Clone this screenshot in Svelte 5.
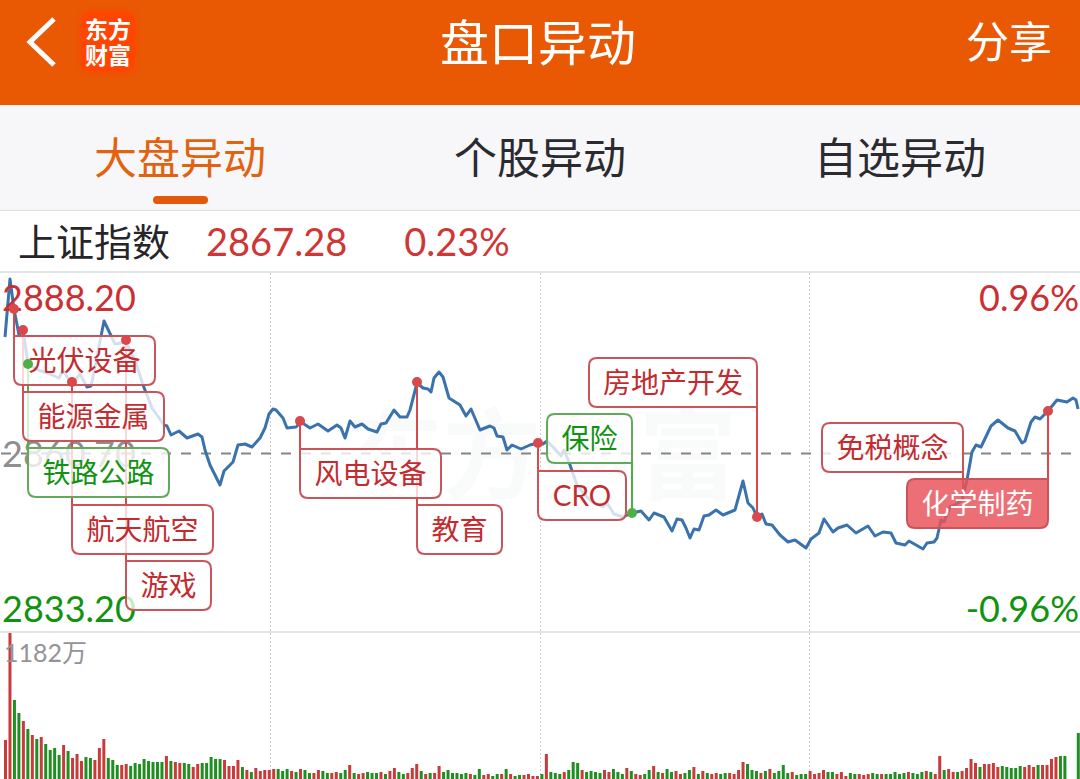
<script>
  const tabs = ['大盘异动', '个股异动', '自选异动'];
  let activeTab = $state(0);

  const RED = '#d9484a';
  const GREEN = '#4fae45';

  // minute line of the index
  const line =
    '5,337 10,279 14,309 19,335 23,330 28,364 38,370 50,374 59,378 63,370 72,385 80,374 87,387 91,386 95,367 ' +
    '104,321 115,344 126,342 135,360 143,385 152,408 164,425 167,426 171,435 179,431 187,438 198,434 202,437 ' +
    '205,450 210,465 220,485 224,471 233,462 238,445 245,444 252,447 260,438 265,428 269,414 273,409 276,410 ' +
    '283,418 287,428 296,427 301,422 310,428 318,424 328,431 337,425 341,428 345,438 350,421 355,427 362,424 ' +
    '368,429 377,432 381,424 386,423 394,410 400,417 407,417 410,410 417,383 423,388 428,389 431,392 434,378 ' +
    '439,372 443,377 449,398 460,405 466,416 471,409 480,430 490,426 494,428 497,436 503,437 507,450 512,445 ' +
    '521,449 530,445 538,443 543,444 547,441 553,447 561,456 564,450 570,465 577,485 585,495 592,502 603,507 ' +
    '607,503 614,514 623,517 632,513 641,511 649,520 654,513 664,517 672,531 677,519 682,520 686,528 690,538 ' +
    '694,529 699,530 704,516 709,515 716,510 723,515 735,510 743,481 748,503 753,508 757,517 762,514 766,524 ' +
    '772,525 780,535 788,542 795,540 806,548 811,539 819,533 824,519 833,532 838,528 847,525 856,533 868,526 ' +
    '875,536 883,532 891,533 896,543 905,545 909,541 923,549 927,543 934,542 937,538 941,520 944,522 950,507 ' +
    '955,505 962,500 967,480 972,452 976,445 981,447 991,426 998,420 1008,428 1015,431 1022,443 1025,441 ' +
    '1031,422 1035,417 1040,419 1048,411 1057,400 1067,402 1073,398 1076,400 1078,409';

  // corner: the one the leader starts from, drawn square
  const marks = [
    { text: '光伏设备', x: 14, y: 336, w: 141, corner: 'tl', dot: 309 },
    { text: '能源金属', x: 23, y: 392, w: 141, corner: 'tl', dot: 330 },
    { text: '铁路公路', x: 28, y: 448, w: 141, corner: 'tl', dot: 364, down: true },
    { text: '航天航空', x: 72, y: 505, w: 141, corner: 'tl', dot: 382 },
    { text: '游戏', x: 126, y: 561, w: 85, corner: 'tl', dot: 340 },
    { text: '风电设备', x: 300, y: 449, w: 141, corner: 'tl', dot: 421 },
    { text: '教育', x: 417, y: 505, w: 85, corner: 'tl', dot: 382 },
    { text: 'CRO', x: 538, y: 471, w: 88, corner: 'tl', dot: 443 },
    { text: '保险', x: 547, y: 414, w: 85, corner: 'br', dot: 513, down: true },
    { text: '房地产开发', x: 589, y: 358, w: 168, corner: 'br', dot: 517 },
    { text: '免税概念', x: 822, y: 423, w: 141, corner: 'br', dot: 500, hidden: true },
    { text: '化学制药', x: 907, y: 479, w: 141, corner: 'tr', dot: 411, filled: true },
  ];
  const H = 49;

  const leaderX = (m) => (m.corner === 'tl' ? m.x : m.x + m.w);
  const leaderY = (m) => (m.corner === 'br' ? m.y + H : m.y);
  const color = (m) => (m.down ? GREEN : RED);

  function box({ x, y, w, corner }) {
    const r = 8;
    const tl = corner === 'tl' ? 0 : r;
    const tr = corner === 'tr' ? 0 : r;
    const br = corner === 'br' ? 0 : r;
    return `M${x + tl} ${y}H${x + w - tr}q${tr} 0 ${tr} ${tr}V${y + H - br}q0 ${br} ${-br} ${br}` +
      `H${x + r}q${-r} 0 ${-r} ${-r}V${y + tl}q0 ${-tl} ${tl} ${-tl}Z`;
  }

  // one entry per minute, r = up, g = down
  const volume = (
    'r39 r146 g79 g66 r58 g50 r44 g40 r42 g35 g29 g31 g24 r34 g28 r21 r25 r18 g22 g21 ' +
    'r19 r31 r40 g21 g19 g14 r14 r15 g13 g16 g15 g20 g18 g17 g17 g17 r23 g18 r17 r16 ' +
    'g16 g15 r12 r15 g16 g16 g22 g20 g20 r19 r13 r13 r19 g12 r9 g7 r11 r8 r9 r9 ' +
    'r10 g10 g8 g10 r8 g7 r10 g9 g6 r6 r9 g8 g6 r6 r7 g6 g9 r14 g6 r5 ' +
    'r6 g7 g6 g6 r7 g5 r8 r11 g7 g5 r6 r11 r15 g8 r5 g6 r6 r13 g7 g9 ' +
    'g6 g6 g5 g6 r5 g4 g10 r4 r5 g3 g5 r5 g10 r5 g3 g4 r4 r5 r3 r3 ' +
    'g5 r25 g7 g6 g5 r7 g9 g17 g16 r9 g7 g8 g7 g6 r9 r7 g10 g7 g5 r11 ' +
    'g8 r5 r4 g5 g9 r13 g7 r6 g10 g7 r8 r5 g6 g9 r12 g5 r8 g6 r5 r6 ' +
    'g5 g6 r6 r5 r9 r17 g15 g9 g8 r6 g8 r10 g6 g8 g14 g6 r7 g4 g5 g5 ' +
    'r8 r5 r6 r9 g7 g7 r5 r7 r3 g6 g5 r5 r4 r5 g6 g5 r5 g5 g5 g7 ' +
    'g5 g6 r7 g6 g5 g7 r8 g7 r5 r23 g9 r10 r7 g7 r8 r11 r20 r16 g12 r15 ' +
    'r15 r16 r12 g13 g12 g11 g11 g13 r12 r14 r12 g14 r14 r14 r20 r22 g23 g23 g0 g0 g46'
  ).split(' ').map((s) => ({ up: s[0] === 'r', h: +s.slice(1) }));
</script>

<header>
  <div class="left">
    <button class="back" aria-label="返回">
      <svg width="34" height="52" viewBox="0 0 34 52">
        <path d="M30 3 6 26l24 23" fill="none" stroke="#fff" stroke-width="5" />
      </svg>
    </button>
    <div class="logo"><span>东方</span><span>财富</span></div>
  </div>
  <h1>盘口异动</h1>
  <button class="share">分享</button>
</header>

<nav>
  {#each tabs as tab, i}
    <button class:active={i === activeTab} onclick={() => (activeTab = i)}>{tab}</button>
  {/each}
</nav>

<div class="quote">
  <span class="name">上证指数</span>
  <span class="price">2867.28</span>
  <span>0.23%</span>
</div>

<svg class="chart" viewBox="0 271 1080 508">
  <text class="watermark" x="345" y="491">东方财富</text>

  <g class="grid">
    <path d="M0 272H1080M0 632H1080" />
    <path class="dotted" d="M270.5 273V779M540.5 273V779M809.5 273V779" />
    <path class="middle" d="M1 453.5H1080" />
  </g>

  <polyline class="line" points={line} />

  <g class="axis">
    <text class="up" x="2" y="311">2888.20</text>
    <text class="flat" x="2" y="467">2860.70</text>
    <text class="down" x="2" y="622">2833.20</text>
    <text class="up" x="1079" y="311" text-anchor="end">0.96%</text>
    <text class="down" x="1079" y="622" text-anchor="end">-0.96%</text>
  </g>

  {#each marks as m}
    <path d="M{leaderX(m)} {m.dot}V{leaderY(m)}" stroke={color(m)} stroke-width="2" />
  {/each}
  {#each marks as m}
    <g class="mark" class:down={m.down} class:filled={m.filled}>
      <path d={box(m)} />
      <text x={m.x + m.w / 2} y={m.y + 35} text-anchor="middle">{m.text}</text>
    </g>
  {/each}
  {#each marks.filter((m) => !m.hidden) as m}
    <circle cx={leaderX(m)} cy={m.dot} r="5" fill={color(m)} />
  {/each}

  {#each volume as v, i}
    <rect x={4 + i * 4.47} y={779 - v.h} width="3" height={v.h} fill={v.up ? '#c93b3b' : '#1f8f22'} />
  {/each}
  <text class="total" x="4" y="662">1182万</text>
</svg>

<style>
  :global(body) {
    margin: 0;
    background: #fff;
    font-family: Lato, "Noto Sans CJK SC", sans-serif;
  }

  button {
    padding: 0;
    border: 0;
    background: none;
    color: inherit;
    font: inherit;
    cursor: pointer;
  }

  header {
    display: grid;
    grid-template-columns: 1fr auto 1fr;
    align-items: center;
    height: 84px;
    padding: 0 28px 21px 24px;
    background: #e95803;
    color: #fff;
  }

  .left {
    display: flex;
    align-items: center;
    gap: 24px;
  }

  .back svg {
    display: block;
  }

  .logo {
    display: flex;
    flex-direction: column;
    padding: 3px;
    border-radius: 10px;
    background: #ff4503;
    box-shadow: 0 0 4px 2px #ff4503;
    font-size: 23px;
    font-weight: 700;
    line-height: 26px;
  }

  h1 {
    margin: 0;
    font-size: 49px;
    font-weight: 400;
    line-height: 60px;
  }

  .share {
    justify-self: end;
    font-size: 43px;
    line-height: 60px;
  }

  nav {
    display: grid;
    grid-template-columns: repeat(3, 1fr);
    border-bottom: 1px solid #dfdfe1;
    background: #f7f7fa;
  }

  nav button {
    position: relative;
    height: 105px;
    padding-bottom: 6px;
    color: #2b2b2f;
    font-size: 43px;
  }

  nav .active {
    color: #e2630f;
  }

  nav .active::after {
    content: "";
    position: absolute;
    bottom: 6px;
    left: 50%;
    width: 55px;
    height: 8px;
    margin-left: -27px;
    border-radius: 4px;
    background: #e2590a;
  }

  .quote {
    display: flex;
    align-items: center;
    height: 60px;
    padding: 0 18px;
    color: #cf3636;
    font-size: 38px;
  }

  .name {
    margin-right: 36px;
    padding-bottom: 4px;
    color: #26262a;
  }

  .price {
    margin-right: 57px;
  }

  .chart {
    display: block;
    width: 100%;
  }

  .watermark {
    fill: #f9fafa;
    font-size: 98px;
    font-weight: 700;
  }

  .grid path {
    fill: none;
    stroke: #e1e5e4;
    stroke-width: 2;
  }

  .grid .dotted {
    stroke: #cccccf;
    stroke-width: 1;
    stroke-dasharray: 2 2;
  }

  .grid .middle {
    stroke: #858585;
    stroke-dasharray: 10 10;
  }

  .line {
    fill: none;
    stroke: #3a72ad;
    stroke-width: 3;
    stroke-linejoin: round;
  }

  .axis {
    font-size: 36px;
  }

  .up {
    fill: #cb2f33;
  }

  .down {
    fill: #119311;
  }

  .flat {
    fill: #8e8e8e;
  }

  .total {
    fill: #949398;
    font-size: 25px;
  }

  .mark path {
    fill: rgba(255, 255, 255, 0.78);
    stroke: #c9555a;
    stroke-width: 2;
  }

  .mark text {
    fill: #c32b2f;
    font-size: 28px;
  }

  .mark.down path {
    stroke: #62a95c;
  }

  .mark.down text {
    fill: #119311;
  }

  .mark.filled path {
    fill: rgba(232, 84, 90, 0.84);
  }

  .mark.filled text {
    fill: #fff;
  }
</style>
